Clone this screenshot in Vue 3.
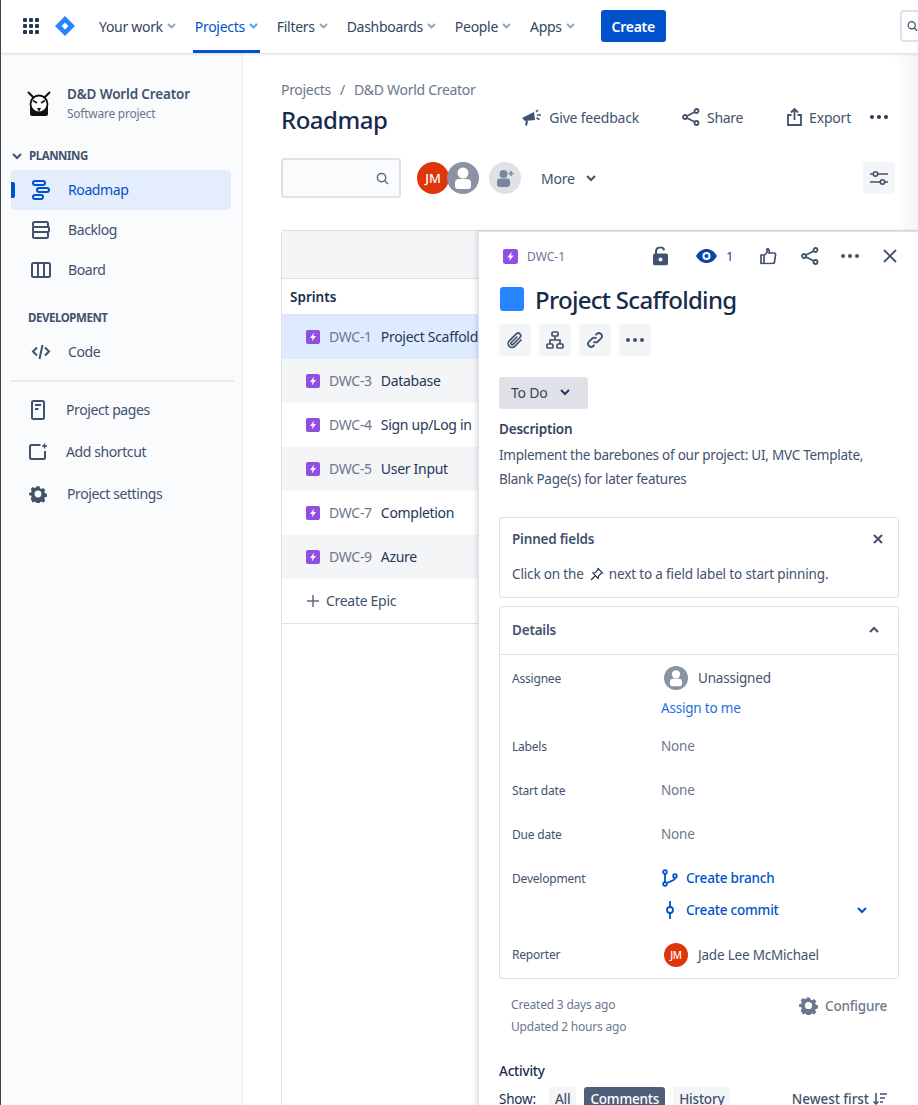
<script setup>
const navItems = [
  { label: 'Your work' },
  { label: 'Projects', active: true },
  { label: 'Filters' },
  { label: 'Dashboards' },
  { label: 'People' },
  { label: 'Apps' }
]

const epics = [
  { key: 'DWC-1', name: 'Project Scaffolding', selected: true },
  { key: 'DWC-3', name: 'Database', shaded: true },
  { key: 'DWC-4', name: 'Sign up/Log in' },
  { key: 'DWC-5', name: 'User Input', shaded: true },
  { key: 'DWC-7', name: 'Completion' },
  { key: 'DWC-9', name: 'Azure', shaded: true }
]

const emptyFields = ['Labels', 'Start date', 'Due date']
</script>

<template>
  <div class="page">
    <!-- top nav -->
    <header class="topbar">
      <svg class="apps" width="16" height="16" viewBox="0 0 16 16" fill="#253858">
        <rect v-for="n in 9" :key="n" :x="((n - 1) % 3) * 6" :y="Math.floor((n - 1) / 3) * 6" width="4" height="4" rx="1" />
      </svg>
      <svg class="logo" width="20" height="20" viewBox="0 0 20 20">
        <path d="M10 0 L20 10 L10 20 L0 10 Z" fill="#2684ff" />
        <path d="M10 6.6 L13.4 10 L10 13.4 L6.6 10 Z" fill="#fff" />
      </svg>
      <nav class="nav">
        <a v-for="item in navItems" :key="item.label" class="nav-item" :class="{ active: item.active }">
          {{ item.label }}
          <svg width="9" height="6" viewBox="0 0 9 6" fill="none" stroke="currentColor" stroke-width="1.8" class="nav-chev"><path d="M1 1l3.5 3.5L8 1" /></svg>
        </a>
      </nav>
      <button class="create">Create</button>
      <div class="top-search">
        <svg width="14" height="14" viewBox="0 0 14 14" fill="none" stroke="#42526e" stroke-width="1.6"><circle cx="6" cy="6" r="4.5" /><path d="M9.5 9.5L13 13" /></svg>
      </div>
    </header>

    <div class="body">
      <!-- sidebar -->
      <aside class="sidebar">
        <div class="project">
          <svg width="24" height="26" viewBox="0 0 24 26">
            <path d="M1 1l6 6M23 1l-6 6" stroke="#111" stroke-width="2" />
            <path d="M3 14h18v9a2 2 0 0 1-2 2H5a2 2 0 0 1-2-2z" fill="#111" />
            <circle cx="12" cy="13" r="8.5" fill="#fff" stroke="#111" stroke-width="1.8" />
            <path d="M6 9.5l4 2.5M18 9.5l-4 2.5" stroke="#111" stroke-width="1.5" />
            <path d="M10 17h4l-2 4z" fill="#111" />
          </svg>
          <div class="project-text">
            <div class="project-name">D&amp;D World Creator</div>
            <div class="project-type">Software project</div>
          </div>
        </div>

        <div class="group-title planning">
          <svg width="10" height="7" viewBox="0 0 10 7" fill="none" stroke="#42526e" stroke-width="2"><path d="M1 1l4 4 4-4" /></svg>
          PLANNING
        </div>
        <a class="side-item current">
          <svg width="18" height="20" viewBox="0 0 18 20" fill="none" stroke="#0052cc" stroke-width="2">
            <rect x="1" y="1" width="12" height="4" rx="2" /><rect x="5" y="8" width="12" height="4" rx="2" /><rect x="1" y="15" width="10" height="4" rx="2" />
          </svg>
          <span>Roadmap</span>
        </a>
        <a class="side-item">
          <svg width="18" height="18" viewBox="0 0 18 18" fill="none" stroke="#42526e" stroke-width="2">
            <rect x="1" y="1" width="15" height="5" rx="1.5" /><rect x="1" y="6" width="16" height="5" rx="1" /><rect x="1" y="11" width="15" height="6" rx="1.5" />
          </svg>
          <span>Backlog</span>
        </a>
        <a class="side-item">
          <svg width="20" height="16" viewBox="0 0 20 16" fill="none" stroke="#42526e" stroke-width="2">
            <rect x="1" y="1" width="18" height="14" rx="1.5" /><path d="M7 1v14M13 1v14" />
          </svg>
          <span>Board</span>
        </a>

        <div class="group-title development">DEVELOPMENT</div>
        <a class="side-item">
          <svg width="18" height="16" viewBox="0 0 18 16" fill="none" stroke="#42526e" stroke-width="2">
            <path d="M5 3.5L1 7.5l4 4M13 3.5l4 4-4 4M10.5 1L7.5 15" />
          </svg>
          <span>Code</span>
        </a>

        <div class="side-divider"></div>

        <a class="side-item tall">
          <svg width="14" height="20" viewBox="0 0 14 20" fill="none" stroke="#42526e" stroke-width="2">
            <rect x="1" y="1" width="12" height="18" rx="1.5" /><path d="M4 5h6M4 9h3.5" />
          </svg>
          <span>Project pages</span>
        </a>
        <a class="side-item tall">
          <svg width="19" height="18" viewBox="0 0 19 18" fill="none" stroke="#42526e" stroke-width="2">
            <path d="M12 2H3a1.5 1.5 0 0 0-1.5 1.5v11A1.5 1.5 0 0 0 3 16h12a1.5 1.5 0 0 0 1.5-1.5V8" /><path d="M16 0.5v5M13.5 3h5" stroke-width="1.5" />
          </svg>
          <span>Add shortcut</span>
        </a>
        <a class="side-item tall gear">
          <svg width="18" height="18" viewBox="-1 -1 20 20">
            <path d="M7.3 0.5h3.4l.5 2.2 1.6.7 2-1.2 2.4 2.4-1.2 2 .7 1.6 2.2.5v3.4l-2.2.5-.7 1.6 1.2 2-2.4 2.4-2-1.2-1.6.7-.5 2.2H7.3l-.5-2.2-1.6-.7-2 1.2L.8 14.4l1.2-2-.7-1.6-2.2-.5V7.7l2.2-.5.7-1.6-1.2-2L3.2 1.2l2 1.2 1.6-.7z" fill="#42526e" />
            <circle cx="9" cy="9" r="3.8" fill="#fafbfc" />
          </svg>
          <span>Project settings</span>
        </a>
      </aside>

      <!-- main -->
      <main class="main">
        <div class="breadcrumbs"><span>Projects</span><span class="slash">/</span><span>D&amp;D World Creator</span></div>
        <div class="title-row">
          <h1>Roadmap</h1>
          <div class="actions">
            <a class="action feedback">
              <svg width="20" height="19" viewBox="0 0 20 19" fill="#42526e">
                <path d="M0 10l12-6 1 8-10 1z" /><path d="M4 13l2 0-1 5-2-1z" />
                <path d="M14 4l2-2M15 7h4M14.5 10l3 1.5" fill="none" stroke="#42526e" stroke-width="1.5" />
              </svg>
              Give feedback
            </a>
            <a class="action share">
              <svg width="18" height="18" viewBox="0 0 18 18" fill="none" stroke="#42526e" stroke-width="1.8"><circle cx="3" cy="9" r="2" /><circle cx="14.5" cy="3" r="2" /><circle cx="14.5" cy="15" r="2" /><path d="M5 8l7.8-4M5 10l7.8 4" /></svg>
              Share
            </a>
            <a class="action export">
              <svg width="15" height="18" viewBox="0 0 15 18" fill="none" stroke="#42526e" stroke-width="1.8"><path d="M4.5 7H1v10h13V7h-3.5M7.5 12V1.5M4 4.5l3.5-3.5 3.5 3.5" /></svg>
              Export
            </a>
            <svg class="dots-main" width="18" height="4" viewBox="0 0 18 4" fill="#253858"><circle cx="2" cy="2" r="2" /><circle cx="9" cy="2" r="2" /><circle cx="16" cy="2" r="2" /></svg>
          </div>
        </div>

        <div class="filters">
          <div class="search">
            <svg width="13" height="13" viewBox="0 0 14 14" fill="none" stroke="#5e6c84" stroke-width="1.6"><circle cx="6" cy="6" r="4.5" /><path d="M9.5 9.5L13 13" /></svg>
          </div>
          <div class="avatars">
            <div class="avatar jm">JM</div>
            <div class="avatar nobody">
              <svg width="32" height="32" viewBox="0 0 32 32"><circle cx="16" cy="16" r="16" fill="#8993a4" /><circle cx="16" cy="11" r="5.5" fill="#fff" /><path d="M8 21a4 4 0 0 1 4-4h8a4 4 0 0 1 4 4v3a3 3 0 0 1-3 3H11a3 3 0 0 1-3-3z" fill="#fff" /></svg>
            </div>
          </div>
          <div class="add-person">
            <svg width="18" height="18" viewBox="0 0 18 18" fill="#7a869a"><circle cx="7.5" cy="5" r="4" /><path d="M1 12.5a3 3 0 0 1 3-3h7a3 3 0 0 1 3 3V15a3 3 0 0 1-3 3H4a3 3 0 0 1-3-3z" /><path d="M15 2v5M12.5 4.5h5" stroke="#7a869a" stroke-width="1.5" /></svg>
          </div>
          <a class="more">More
            <svg width="10" height="7" viewBox="0 0 10 7" fill="none" stroke="#42526e" stroke-width="2"><path d="M1 1l4 4 4-4" /></svg>
          </a>
          <div class="view-settings">
            <svg width="18" height="14" viewBox="0 0 18 14" fill="none" stroke="#42526e" stroke-width="1.6"><path d="M0 3h3M8 3h10M0 11h10M15 11h3" /><circle cx="5.5" cy="3" r="2.2" /><circle cx="12.5" cy="11" r="2.2" /></svg>
          </div>
        </div>

        <div class="timeline">
          <div class="timeline-head"></div>
          <div class="sprints">Sprints</div>
          <div
            v-for="epic in epics"
            :key="epic.key"
            class="epic"
            :class="{ selected: epic.selected, shaded: epic.shaded }"
          >
            <svg class="epic-icon" width="14" height="14" viewBox="0 0 14 14"><rect width="14" height="14" rx="2" fill="#904ee2" /><path d="M8.2 2.5L4 8h2.6L5.8 11.5 10 6H7.4z" fill="#fff" /></svg>
            <span class="epic-key">{{ epic.key }}</span>
            <span class="epic-name">{{ epic.name }}</span>
          </div>
          <div class="create-epic">
            <svg width="12" height="12" viewBox="0 0 12 12" stroke="#5e6c84" stroke-width="1.5"><path d="M6 0v12M0 6h12" /></svg>
            Create Epic
          </div>
        </div>
      </main>
    </div>

    <!-- issue panel -->
    <section class="panel">
      <div class="panel-top">
        <div class="panel-key">
          <svg width="15" height="15" viewBox="0 0 14 14"><rect width="14" height="14" rx="2" fill="#904ee2" /><path d="M8.2 2.5L4 8h2.6L5.8 11.5 10 6H7.4z" fill="#fff" /></svg>
          <span>DWC-1</span>
        </div>
        <div class="panel-tools">
          <svg class="t-lock" width="15" height="19" viewBox="0 0 15 19"><path d="M3 8V5a4.2 4.2 0 0 1 8.2-1.2" fill="none" stroke="#42526e" stroke-width="2" /><rect y="7" width="15" height="12" rx="2" fill="#42526e" /><circle cx="7.5" cy="13" r="2" fill="#fff" /></svg>
          <svg class="t-eye" width="21" height="14" viewBox="0 0 21 14"><path d="M0 7C3 2 6.5 0 10.5 0S18 2 21 7c-3 5-6.5 7-10.5 7S3 12 0 7z" fill="#0747a6" /><circle cx="10.5" cy="7" r="4" fill="#fff" /><circle cx="10.5" cy="7" r="2" fill="#0747a6" /></svg>
          <span class="t-count">1</span>
          <svg class="t-like" width="17" height="17" viewBox="0 0 17 17" fill="none" stroke="#42526e" stroke-width="1.7"><path d="M1 7.5h3V16H1zM4 8l3-3V1.5c2-.5 2.5 1.5 2 4h5a1.5 1.5 0 0 1 1.5 2L14.5 14a2 2 0 0 1-2 2H4" /></svg>
          <svg class="t-share" width="18" height="18" viewBox="0 0 18 18" fill="none" stroke="#42526e" stroke-width="1.8"><circle cx="3" cy="9" r="2" /><circle cx="14.5" cy="3" r="2" /><circle cx="14.5" cy="15" r="2" /><path d="M5 8l7.8-4M5 10l7.8 4" /></svg>
          <svg class="t-dots" width="18" height="4" viewBox="0 0 18 4" fill="#42526e"><circle cx="2" cy="2" r="2" /><circle cx="9" cy="2" r="2" /><circle cx="16" cy="2" r="2" /></svg>
          <svg class="t-close" width="14" height="14" viewBox="0 0 14 14" fill="none" stroke="#42526e" stroke-width="1.8"><path d="M1 1l12 12M13 1L1 13" /></svg>
        </div>
      </div>

      <div class="issue-title">
        <div class="epic-color"></div>
        <h2>Project Scaffolding</h2>
      </div>

      <div class="icon-btns">
        <button>
          <svg width="18" height="18" viewBox="0 0 18 18" fill="none" stroke="#42526e" stroke-width="1.7"><path d="M15.5 8.5l-6.8 6.8a3.8 3.8 0 0 1-5.4-5.4l7-7a2.5 2.5 0 0 1 3.6 3.6l-6.8 6.8a1.2 1.2 0 0 1-1.8-1.8l6-6" /></svg>
        </button>
        <button>
          <svg width="18" height="18" viewBox="0 0 18 18" fill="none" stroke="#42526e" stroke-width="1.7"><rect x="6" y="1" width="6" height="4" rx="1" /><rect x="1" y="13" width="6" height="4" rx="1" /><rect x="11" y="13" width="6" height="4" rx="1" /><path d="M9 5v4M4 13V9h10v4" /></svg>
        </button>
        <button>
          <svg width="18" height="18" viewBox="0 0 18 18" fill="none" stroke="#42526e" stroke-width="1.8"><path d="M7.5 10.5a3 3 0 0 0 4.3 0l3.2-3.2a3 3 0 0 0-4.3-4.3l-1.2 1.2" /><path d="M10.5 7.5a3 3 0 0 0-4.3 0L3 10.7a3 3 0 0 0 4.3 4.3l1.2-1.2" /></svg>
        </button>
        <button>
          <svg width="18" height="4" viewBox="0 0 18 4" fill="#42526e"><circle cx="2" cy="2" r="2" /><circle cx="9" cy="2" r="2" /><circle cx="16" cy="2" r="2" /></svg>
        </button>
      </div>

      <button class="status">To Do
        <svg width="10" height="7" viewBox="0 0 10 7" fill="none" stroke="#253858" stroke-width="2"><path d="M1 1l4 4 4-4" /></svg>
      </button>

      <div class="desc-label">Description</div>
      <p class="desc">Implement the barebones of our project: UI, MVC Template,<br />Blank Page(s) for later features</p>

      <div class="box pinned">
        <div class="box-head pinned-head">
          <span>Pinned fields</span>
          <svg width="10" height="10" viewBox="0 0 10 10" fill="none" stroke="#42526e" stroke-width="2"><path d="M1 1l8 8M9 1L1 9" /></svg>
        </div>
        <div class="pinned-text">
          Click on the
          <svg class="pin" width="14" height="14" viewBox="0 0 14 14" fill="none" stroke="#253858" stroke-width="1.2"><path d="M8 1.5l4.5 4.5-1.5.5-2.5 2.5-.5 2.5L3 6l2.5-.5L7.500 3zM5 9l-4 4" /></svg>
          next to a field label to start pinning.
        </div>
      </div>

      <div class="box details">
        <div class="box-head details-head">
          <span>Details</span>
          <svg width="10" height="7" viewBox="0 0 10 7" fill="none" stroke="#42526e" stroke-width="2"><path d="M1 6l4-4 4 4" /></svg>
        </div>
        <div class="field assignee">
          <div class="field-label">Assignee</div>
          <div class="field-value">
            <div class="person">
              <svg width="24" height="24" viewBox="0 0 32 32"><circle cx="16" cy="16" r="16" fill="#8993a4" /><circle cx="16" cy="11" r="5.5" fill="#fff" /><path d="M8 21a4 4 0 0 1 4-4h8a4 4 0 0 1 4 4v3a3 3 0 0 1-3 3H11a3 3 0 0 1-3-3z" fill="#fff" /></svg>
              <span>Unassigned</span>
            </div>
            <a class="assign-me">Assign to me</a>
          </div>
        </div>
        <div v-for="name in emptyFields" :key="name" class="field plain">
          <div class="field-label">{{ name }}</div>
          <div class="field-value none">None</div>
        </div>
        <div class="field dev">
          <div class="field-label">Development</div>
          <div class="field-value">
            <a class="dev-link">
              <svg width="16" height="18" viewBox="0 0 16 18" fill="none" stroke="#0052cc" stroke-width="1.8"><circle cx="3" cy="3" r="1.8" /><circle cx="3" cy="15" r="1.8" /><circle cx="13" cy="7" r="1.8" /><path d="M3 5v8M13 9c0 3-5 3-8 5" /></svg>
              Create branch
            </a>
            <a class="dev-link">
              <svg width="16" height="18" viewBox="0 0 16 18" fill="none" stroke="#0052cc" stroke-width="1.8"><circle cx="8" cy="9" r="3" /><path d="M8 0v6M8 12v6" /></svg>
              Create commit
              <svg class="dev-chev" width="10" height="7" viewBox="0 0 10 7" fill="none" stroke="#0052cc" stroke-width="2"><path d="M1 1l4 4 4-4" /></svg>
            </a>
          </div>
        </div>
        <div class="field reporter">
          <div class="field-label">Reporter</div>
          <div class="field-value person">
            <div class="avatar small">JM</div>
            <span>Jade Lee McMichael</span>
          </div>
        </div>
      </div>

      <div class="meta">
        <div class="dates">
          <div>Created 3 days ago</div>
          <div>Updated 2 hours ago</div>
        </div>
        <a class="configure">
          <svg width="19" height="19" viewBox="-1 -1 20 20">
            <path d="M7.3 0.5h3.4l.5 2.2 1.6.7 2-1.2 2.4 2.4-1.2 2 .7 1.6 2.2.5v3.4l-2.2.5-.7 1.6 1.2 2-2.4 2.4-2-1.2-1.6.7-.5 2.2H7.3l-.5-2.2-1.6-.7-2 1.2L.8 14.4l1.2-2-.7-1.6-2.2-.5V7.7l2.2-.5.7-1.6-1.2-2L3.2 1.2l2 1.2 1.6-.7z" fill="#6b778c" />
            <circle cx="9" cy="9" r="3.8" fill="#fff" />
          </svg>
          Configure
        </a>
      </div>

      <div class="activity-label">Activity</div>
      <div class="activity">
        <span class="show">Show:</span>
        <button class="tab">All</button>
        <button class="tab on">Comments</button>
        <button class="tab">History</button>
        <span class="sort">Newest first
          <svg width="14" height="12" viewBox="0 0 14 12" fill="none" stroke="#42526e" stroke-width="1.5"><path d="M3 0v11M0.5 8.5L3 11l2.5-2.5M7 1h7M7 5h5M7 9h3" /></svg>
        </span>
      </div>
    </section>
  </div>
</template>

<style>
html, body { margin: 0; background: #fff; overflow: hidden; }
</style>

<style scoped>
.page {
  position: relative;
  width: 918px;
  height: 1105px;
  overflow: hidden;
  font-family: "Noto Sans", "Open Sans", sans-serif;
  font-size: 14px;
  color: #42526e;
  border-left: 1px solid #444;
  box-sizing: border-box;
}

.topbar {
  display: flex;
  align-items: center;
  height: 54px;
  box-sizing: border-box;
  padding-bottom: 1px;
  border-bottom: 1px solid #dfe1e6;
  box-shadow: 0 1px 2px rgba(9, 30, 66, 0.08);
  background: #fff;
  position: relative;
  z-index: 2;
}
.apps { margin-left: 22px; }
.logo { margin-left: 16px; }
.nav { display: flex; align-self: stretch; margin-left: 16px; }
.nav-item {
  position: relative;
  display: flex;
  align-items: center;
  gap: 4px;
  padding: 0 8px;
  margin-right: 3px;
  color: #344563;
  letter-spacing: -0.3px;
  white-space: nowrap;
}
.nav-chev { color: #97a0af; }
.nav-item.active { color: #0052cc; }
.nav-item.active::after {
  content: "";
  position: absolute;
  left: 6px;
  right: 6px;
  bottom: -1px;
  height: 3px;
  background: #0052cc;
}
.nav-item.active .nav-chev { color: #4c9aff; }
.create {
  margin-left: 15px;
  width: 65px;
  height: 32px;
  border: 0;
  border-radius: 3px;
  background: #0052cc;
  color: #fff;
  font: 600 14px "Noto Sans", sans-serif;
  letter-spacing: -0.3px;
}
.top-search {
  margin-left: auto;
  width: 18px;
  height: 32px;
  border: 2px solid #dfe1e6;
  border-right: 0;
  border-radius: 4px 0 0 4px;
  display: flex;
  align-items: center;
  padding-left: 5px;
  overflow: hidden;
  box-sizing: border-box;
}

.body { display: flex; height: 1051px; }

.sidebar {
  width: 242px;
  flex: none;
  box-sizing: border-box;
  background: #fafbfc;
  border-right: 1px solid #e6e8ec;
  padding: 31px 10px 0;
}
.project { display: flex; align-items: center; gap: 16px; padding-left: 16px; height: 38px; }
.project-name { font-weight: 600; font-size: 13.5px; letter-spacing: -0.15px; line-height: 20px; }
.project-type { font-size: 12px; color: #6b778c; line-height: 20px; letter-spacing: -0.25px; }
.group-title { font-size: 11.5px; font-weight: 700; color: #42526e; letter-spacing: -0.45px; line-height: 16px; }
.planning { display: flex; align-items: center; gap: 7px; margin: 25px 0 6px; padding-left: 1px; }
.development { margin: 20px 0 6px 17px; }
.side-item {
  display: flex;
  align-items: center;
  height: 40px;
  box-sizing: border-box;
  padding: 0 0 1px 20px;
  position: relative;
  border-radius: 4px;
  letter-spacing: -0.4px;
}
.side-item svg { flex: none; width: 20px; }
.side-item span { margin-left: 17px; }
.side-item.tall { height: 42px; padding-left: 17px; }
.side-item.tall span { margin-left: 18px; }
.side-item.gear span { margin-left: 19px; }
.side-item.current { background: #e4edfb; color: #0052cc; width: 220px; }
.side-item.current::before {
  content: "";
  position: absolute;
  left: 0;
  top: 12px;
  width: 4px;
  height: 16px;
  background: #0052cc;
  border-radius: 0 2px 2px 0;
}
.side-divider { height: 2px; background: #ebecf0; margin: 8px 0 7px -1px; width: 224px; }

.main { flex: 1; min-width: 0; padding: 27px 0 0 38px; position: relative; overflow: hidden; }
.main::after {
  content: "";
  position: absolute;
  top: 0;
  right: 0;
  width: 24px;
  height: 176px;
  background: linear-gradient(to right, rgba(244, 245, 247, 0), #f4f5f7);
}
.breadcrumbs { display: flex; gap: 9px; color: #6b778c; line-height: 18px; letter-spacing: -0.3px; }
.title-row { display: flex; align-items: center; height: 40px; }
h1 { margin: 0; font-size: 24px; font-weight: 500; color: #172b4d; letter-spacing: -0.5px; }
.actions { display: flex; align-items: center; margin: 0 30px 4px auto; }
.action { display: flex; align-items: center; gap: 7px; letter-spacing: -0.2px; white-space: nowrap; }
.share { margin-left: 43px; letter-spacing: -0.3px; }
.export { margin-left: 44px; }
.dots-main { margin-left: 19px; }
.filters { display: flex; align-items: center; height: 40px; margin-top: 19px; padding-right: 23px; }
.search {
  width: 120px;
  height: 40px;
  box-sizing: border-box;
  border: 2px solid #dfe1e6;
  border-radius: 3px;
  background: #fafbfc;
  display: flex;
  align-items: center;
  justify-content: flex-end;
  padding-right: 10px;
}
.avatars { display: flex; margin-left: 16px; }
.avatar {
  width: 32px;
  height: 32px;
  border-radius: 50%;
  background: #de350b;
  color: #fff;
  font-size: 13px;
  font-weight: 500;
  display: flex;
  align-items: center;
  justify-content: center;
}
.nobody { margin-left: -2px; background: none; }
.add-person {
  width: 32px;
  height: 32px;
  margin-left: 10px;
  border-radius: 50%;
  background: #dfe1e6;
  display: flex;
  align-items: center;
  justify-content: center;
}
.more { display: flex; align-items: center; gap: 11px; margin-left: 20px; letter-spacing: -0.2px; }
.view-settings {
  width: 32px;
  height: 32px;
  margin-left: auto;
  background: #f4f5f7;
  border-radius: 3px;
  display: flex;
  align-items: center;
  justify-content: center;
}

.timeline {
  margin-top: 32px;
  height: 900px;
  border: 1px solid #dfe1e6;
  border-radius: 3px 0 0 0;
}
.timeline-head { height: 47px; background: #f4f5f7; border-bottom: 1px solid #dfe1e6; }
.sprints {
  height: 36px;
  line-height: 36px;
  padding-left: 8px;
  font-weight: 600;
  font-size: 13.5px;
  color: #172b4d;
  border-bottom: 1px solid #dfe1e6;
  box-sizing: border-box;
}
.epic { display: flex; align-items: center; height: 44px; box-sizing: border-box; padding: 0 0 1px 24px; white-space: nowrap; letter-spacing: -0.3px; }
.epic.selected { background: #deebff; }
.epic.shaded { background: #f4f5f7; }
.epic-icon { flex: none; }
.epic-key { margin-left: 9px; color: #6b778c; }
.epic-name { margin-left: 9px; color: #253858; }
.create-epic {
  display: flex;
  align-items: center;
  gap: 7px;
  height: 45px;
  box-sizing: border-box;
  padding: 0 0 1px 25px;
  border-bottom: 1px solid #dfe1e6;
  color: #42526e;
  letter-spacing: -0.3px;
}

.panel {
  position: absolute;
  z-index: 3;
  left: 477px;
  top: 231px;
  width: 441px;
  height: 900px;
  box-sizing: border-box;
  padding: 0 19px 0 20px;
  background: #fff;
  border-top: 1px solid #dfe1e6;
  border-left: 1px solid #dfe1e6;
  box-shadow: -2px 0 4px rgba(9, 30, 66, 0.12);
}
.panel-top { display: flex; align-items: center; height: 48px; }
.panel-key { display: flex; align-items: center; gap: 9px; margin-left: 4px; font-size: 12px; color: #6b778c; }
.panel-tools { position: relative; flex: 1; height: 48px; }
.panel-tools > * { position: absolute; top: 50%; transform: translateY(-50%); }
.t-lock { left: 88px; }
.t-eye { left: 131px; }
.t-count { left: 161px; color: #0747a6; font-size: 13px; }
.t-like { left: 195px; }
.t-share { left: 236px; }
.t-dots { left: 276px; }
.t-close { left: 318px; }
.issue-title { display: flex; align-items: center; gap: 11px; margin-top: 2px; height: 34px; padding-left: 1px; }
.epic-color { width: 24px; height: 24px; margin-top: -1px; background: #2684ff; border-radius: 3px; }
h2 { margin: 0; font-size: 24px; font-weight: 500; color: #172b4d; letter-spacing: -0.7px; white-space: nowrap; }
.icon-btns { display: flex; gap: 8px; margin-top: 8px; }
.icon-btns button {
  width: 32px;
  height: 32px;
  padding: 0;
  border: 0;
  border-radius: 3px;
  background: #f4f5f7;
  display: flex;
  align-items: center;
  justify-content: center;
}
.status {
  display: flex;
  align-items: center;
  gap: 12px;
  height: 32px;
  width: 89px;
  margin-top: 21px;
  padding: 0 0 1px 12px;
  border: 0;
  border-radius: 3px;
  background: #dfe1e6;
  color: #344563;
  font: 14px "Noto Sans", sans-serif;
  letter-spacing: -0.2px;
}
.desc-label { margin-top: 10px; font-weight: 600; line-height: 20px; letter-spacing: -0.2px; font-size: 13.5px; color: #344563; }
.desc { margin: 4px 0 0; line-height: 24px; letter-spacing: -0.25px; font-size: 13.5px; }

.box { width: 400px; box-sizing: border-box; border: 1px solid #dfe1e6; border-radius: 3px; }
.box-head { display: flex; align-items: center; justify-content: space-between; font-weight: 600; font-size: 13.5px; letter-spacing: -0.2px; }
.pinned { margin-top: 26px; height: 81px; }
.pinned-head { height: 42px; padding: 0 15px 0 12px; }
.pinned-text { display: flex; align-items: center; gap: 6px; padding-left: 12px; margin-top: 5px; font-size: 13.5px; letter-spacing: -0.15px; }
.pin { margin-right: -1px; }
.details { margin-top: 8px; height: 373px; }
.details-head { height: 48px; box-sizing: border-box; padding: 0 19px 2px 12px; border-bottom: 1px solid #dfe1e6; }
.field { display: grid; grid-template-columns: 149px 1fr; padding-left: 12px; }
.field-label { font-size: 12px; letter-spacing: -0.2px; line-height: 18px; }
.field-value { margin-top: -1px; letter-spacing: -0.2px; font-size: 13.5px; }
.assignee { padding-top: 15px; height: 69px; box-sizing: border-box; }
.person { display: flex; align-items: center; gap: 10px; padding-left: 3px; height: 24px; margin-top: -3px; }
.assign-me { display: block; margin-top: 9px; line-height: 18px; color: #1d6fe0; }
.plain { height: 44px; align-items: start; padding-top: 14px; box-sizing: border-box; }
.none { line-height: 18px; color: #6b778c; }
.dev { padding-top: 14px; height: 76px; box-sizing: border-box; }
.dev-link {
  display: flex;
  align-items: center;
  gap: 8px;
  height: 18px;
  margin-bottom: 14px;
  color: #0052cc;
  font-weight: 500;
  padding-left: 1px;
  padding-right: 31px;
}
.dev-chev { margin-left: auto; }
.reporter { padding-top: 11px; align-items: center; }
.reporter .person { margin-top: 0; }
.avatar.small { width: 24px; height: 24px; font-size: 10px; }
.meta { display: flex; justify-content: space-between; align-items: flex-start; padding: 15px 12px 0 12px; width: 400px; box-sizing: border-box; }
.dates { font-size: 12px; line-height: 22px; color: #6b778c; letter-spacing: -0.2px; }
.configure { display: flex; align-items: center; gap: 7px; margin-top: 2px; color: #6b778c; font-weight: 500; font-size: 13.5px; letter-spacing: -0.2px; }
.activity-label { margin-top: 23px; font-weight: 500; line-height: 20px; color: #172b4d; font-size: 13.5px; letter-spacing: -0.2px; }
.activity { display: flex; align-items: center; margin-top: 6px; width: 400px; height: 24px; }
.show { color: #172b4d; margin-right: 13px; font-size: 13.5px; letter-spacing: -0.2px; }
.tab {
  height: 24px;
  margin-right: 8px;
  padding: 0 6px;
  border: 0;
  border-radius: 3px;
  background: #f4f5f7;
  color: #42526e;
  font: 500 13.5px "Noto Sans", sans-serif;
  letter-spacing: -0.2px;
}
.tab.on { background: #505f79; color: #fff; }
.sort { margin-left: auto; margin-right: 12px; display: flex; align-items: center; gap: 4px; font-weight: 500; font-size: 13.5px; letter-spacing: -0.05px; }
</style>
